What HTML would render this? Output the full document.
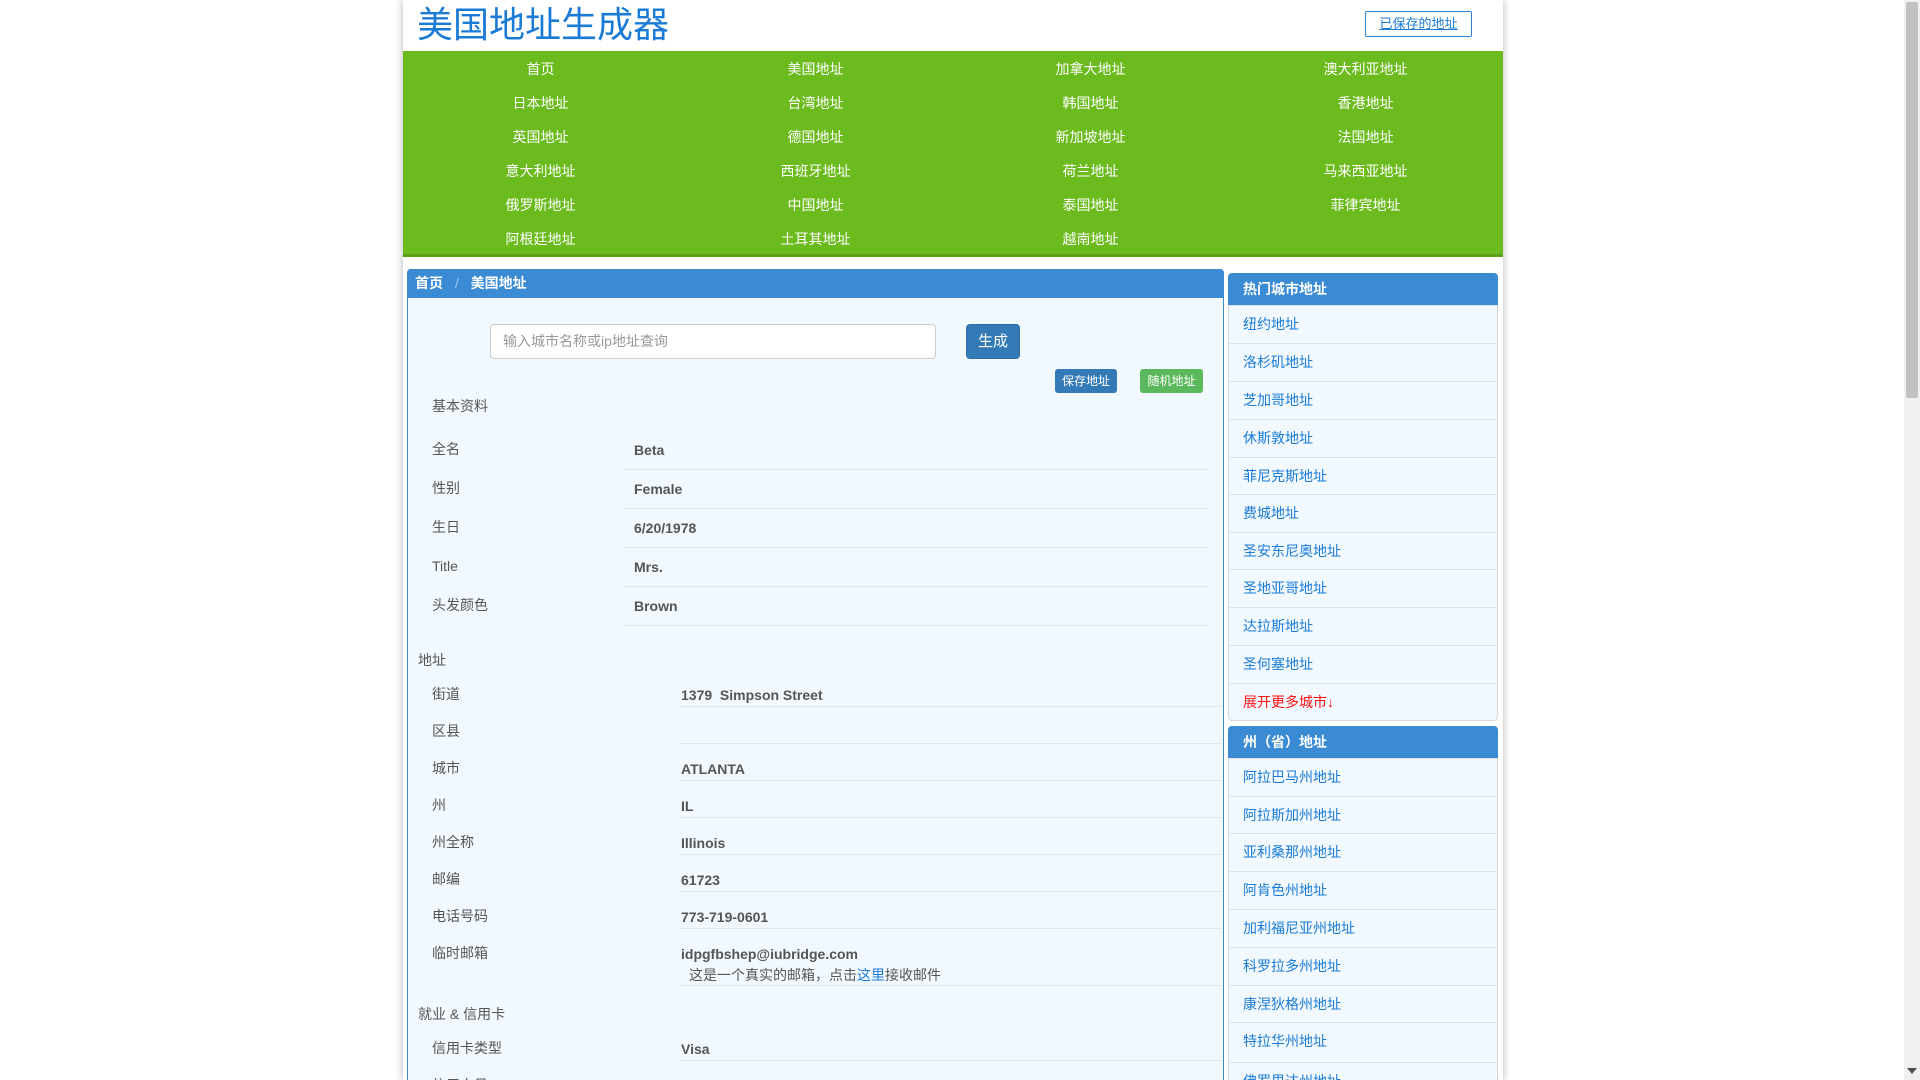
<!DOCTYPE html>
<html><head><meta charset="utf-8"><style>
*{box-sizing:border-box;margin:0;padding:0}
html,body{width:1920px;height:1080px;overflow:hidden;background:#fff}
body{font-family:"Liberation Sans","Noto Sans CJK SC",sans-serif}
#root{position:relative;width:1920px;height:1080px;overflow:hidden}
.a{position:absolute;white-space:nowrap}
#wrap{position:absolute;left:403px;top:0;width:1100px;height:1080px;background:#fff;box-shadow:0 0 8px rgba(0,0,0,.3)}
#nav{position:absolute;left:403px;top:51px;width:1100px;height:206px;background:#6cbb1e;border-bottom:3px solid #5a9f14}
.n{position:absolute;width:275px;text-align:center;color:#fff;font-size:14px;line-height:20px}
.lbl{position:absolute;left:432px;color:#555;font-size:14px;line-height:20px}
.val{position:absolute;color:#555;font-weight:bold;font-size:14px;line-height:20px}
.ln{position:absolute;height:1px;background:#e2e6ea}
.si{position:absolute;left:1228px;width:270px;height:38px;border-top:1px solid #dde1e4;color:#1a7bd6;font-size:14px;line-height:37px;padding-left:15px;overflow:hidden}
.sh{position:absolute;left:1228px;width:270px;height:32px;background:#3a8bd4;color:#fff;font-weight:bold;font-size:14px;line-height:32px;padding-left:15px;border-radius:4px 4px 0 0}
</style></head><body><div id="root">
<div id="wrap"></div>
<div class="a" style="left:417px;top:3px;font-size:36px;color:#1a7bd6;line-height:44px">美国地址生成器</div>
<div class="a" style="left:1365px;top:11px;width:107px;height:26px;border:1px solid #2a7fd0;border-radius:2px;color:#1a7bd6;font-size:13px;text-align:center;line-height:24px;text-decoration:underline">已保存的地址</div>
<div id="nav"></div>
<div class="n" style="left:403px;top:59px">首页</div><div class="n" style="left:678px;top:59px">美国地址</div><div class="n" style="left:953px;top:59px">加拿大地址</div><div class="n" style="left:1228px;top:59px">澳大利亚地址</div>
<div class="n" style="left:403px;top:93px">日本地址</div><div class="n" style="left:678px;top:93px">台湾地址</div><div class="n" style="left:953px;top:93px">韩国地址</div><div class="n" style="left:1228px;top:93px">香港地址</div>
<div class="n" style="left:403px;top:127px">英国地址</div><div class="n" style="left:678px;top:127px">德国地址</div><div class="n" style="left:953px;top:127px">新加坡地址</div><div class="n" style="left:1228px;top:127px">法国地址</div>
<div class="n" style="left:403px;top:161px">意大利地址</div><div class="n" style="left:678px;top:161px">西班牙地址</div><div class="n" style="left:953px;top:161px">荷兰地址</div><div class="n" style="left:1228px;top:161px">马来西亚地址</div>
<div class="n" style="left:403px;top:195px">俄罗斯地址</div><div class="n" style="left:678px;top:195px">中国地址</div><div class="n" style="left:953px;top:195px">泰国地址</div><div class="n" style="left:1228px;top:195px">菲律宾地址</div>
<div class="n" style="left:403px;top:229px">阿根廷地址</div><div class="n" style="left:678px;top:229px">土耳其地址</div><div class="n" style="left:953px;top:229px">越南地址</div>
<div class="a" style="left:407px;top:269px;width:817px;height:830px;background:#f1f8fe;border:1px solid #3a8bd4;border-radius:4px 4px 0 0"></div>
<div class="a" style="left:407px;top:269px;width:817px;height:29px;background:#3a8bd4;border-radius:4px 4px 0 0;color:#fff;font-weight:bold;font-size:14px;line-height:29px;padding-left:8px">首页 <span style="font-weight:normal;color:#9cc4ea;margin:0 8px">/</span> 美国地址</div>
<div class="a" style="left:490px;top:324px;width:446px;height:35px;background:#fff;border:1px solid #ccc;border-radius:4px;color:#999;font-size:14px;line-height:33px;padding-left:12px">输入城市名称或ip地址查询</div>
<div class="a" style="left:966px;top:324px;width:54px;height:35px;background:#337ab7;border:1px solid #2e6da4;border-radius:4px;color:#fff;font-size:15px;text-align:center;line-height:33px">生成</div>
<div class="a" style="left:1055px;top:369px;width:62px;height:24px;background:#337ab7;border-radius:3px;color:#fff;font-size:12px;text-align:center;line-height:24px">保存地址</div>
<div class="a" style="left:1140px;top:369px;width:63px;height:24px;background:#5cb85c;border-radius:3px;color:#fff;font-size:12px;text-align:center;line-height:24px">随机地址</div>
<div class="a" style="left:432px;top:396px;color:#555;font-size:14px;line-height:20px">基本资料</div>
<div class="lbl" style="top:439px">全名</div><div class="val" style="left:634px;top:440px">Beta</div><div class="ln" style="left:624px;top:469px;width:585px"></div>
<div class="lbl" style="top:478px">性别</div><div class="val" style="left:634px;top:479px">Female</div><div class="ln" style="left:624px;top:508px;width:585px"></div>
<div class="lbl" style="top:517px">生日</div><div class="val" style="left:634px;top:518px">6/20/1978</div><div class="ln" style="left:624px;top:547px;width:585px"></div>
<div class="lbl" style="top:556px">Title</div><div class="val" style="left:634px;top:557px">Mrs.</div><div class="ln" style="left:624px;top:586px;width:585px"></div>
<div class="lbl" style="top:595px">头发颜色</div><div class="val" style="left:634px;top:596px">Brown</div><div class="ln" style="left:624px;top:625px;width:585px"></div>
<div class="a" style="left:418px;top:650px;color:#555;font-size:14px;line-height:20px">地址</div>
<div class="lbl" style="top:684px">街道</div><div class="val" style="left:681px;top:685px">1379&nbsp; Simpson Street</div><div class="ln" style="left:679px;top:706px;width:543px"></div>
<div class="lbl" style="top:721px">区县</div><div class="ln" style="left:679px;top:743px;width:543px"></div>
<div class="lbl" style="top:758px">城市</div><div class="val" style="left:681px;top:759px">ATLANTA</div><div class="ln" style="left:679px;top:780px;width:543px"></div>
<div class="lbl" style="top:795px">州</div><div class="val" style="left:681px;top:796px">IL</div><div class="ln" style="left:679px;top:817px;width:543px"></div>
<div class="lbl" style="top:832px">州全称</div><div class="val" style="left:681px;top:833px">Illinois</div><div class="ln" style="left:679px;top:854px;width:543px"></div>
<div class="lbl" style="top:869px">邮编</div><div class="val" style="left:681px;top:870px">61723</div><div class="ln" style="left:679px;top:891px;width:543px"></div>
<div class="lbl" style="top:906px">电话号码</div><div class="val" style="left:681px;top:907px">773-719-0601</div><div class="ln" style="left:679px;top:928px;width:543px"></div>
<div class="lbl" style="top:943px">临时邮箱</div><div class="val" style="left:681px;top:944px">idpgfbshep@iubridge.com</div>
<div class="a" style="left:689px;top:965px;color:#555;font-size:14px;line-height:20px">这是一个真实的邮箱，点击<span style="color:#1a7bd6">这里</span>接收邮件</div><div class="ln" style="left:679px;top:985px;width:543px"></div>
<div class="a" style="left:418px;top:1004px;color:#555;font-size:14px;line-height:20px">就业 &amp; 信用卡</div>
<div class="lbl" style="top:1038px">信用卡类型</div><div class="val" style="left:681px;top:1039px">Visa</div><div class="ln" style="left:679px;top:1060px;width:543px"></div>
<div class="lbl" style="top:1075px">信用卡号</div>
<div class="a" style="left:1228px;top:273px;width:270px;height:448px;background:#f1f8fe;border:1px solid #d6dadd;border-radius:4px"></div>
<div class="sh" style="top:273px">热门城市地址</div>
<div class="si" style="top:305px">纽约地址</div><div class="si" style="top:343px">洛杉矶地址</div><div class="si" style="top:381px">芝加哥地址</div><div class="si" style="top:419px">休斯敦地址</div><div class="si" style="top:457px">菲尼克斯地址</div><div class="si" style="top:494px">费城地址</div><div class="si" style="top:532px">圣安东尼奥地址</div><div class="si" style="top:569px">圣地亚哥地址</div><div class="si" style="top:607px">达拉斯地址</div><div class="si" style="top:645px">圣何塞地址</div><div class="si" style="top:683px;color:#f11">展开更多城市↓</div>
<div class="a" style="left:1228px;top:726px;width:270px;height:380px;background:#f1f8fe;border:1px solid #d6dadd;border-radius:4px"></div>
<div class="sh" style="top:726px">州（省）地址</div>
<div class="si" style="top:758px">阿拉巴马州地址</div><div class="si" style="top:796px">阿拉斯加州地址</div><div class="si" style="top:833px">亚利桑那州地址</div><div class="si" style="top:871px">阿肯色州地址</div><div class="si" style="top:909px">加利福尼亚州地址</div><div class="si" style="top:947px">科罗拉多州地址</div><div class="si" style="top:985px">康涅狄格州地址</div><div class="si" style="top:1022px">特拉华州地址</div><div class="si" style="top:1062px">佛罗里达州地址</div>
<div class="a" style="left:1904px;top:0;width:16px;height:1080px;background:#f1f1f1"></div>
<div class="a" style="left:1906px;top:2px;width:12px;height:396px;background:#c1c1c1;border-radius:2px"></div>
<div class="a" style="left:1907px;top:1068px;width:0;height:0;border-left:5px solid transparent;border-right:5px solid transparent;border-top:6px solid #505050"></div>
</div></body></html>
